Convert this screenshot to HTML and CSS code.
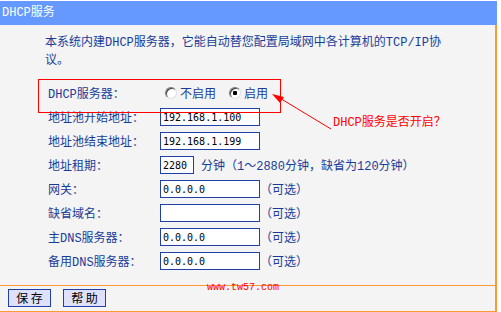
FILE: index.html
```html
<!DOCTYPE html>
<html lang="zh-CN">
<head>
    <meta charset="UTF-8">
    <title>DHCP服务</title>
    <link rel="stylesheet" href="styles.css">
</head>
<body>
    <div class="page">
        <div class="title">DHCP服务</div>

        <div class="content">
            <p class="intro">本系统内建DHCP服务器，它能自动替您配置局域网中各计算机的TCP/IP协议。</p>

            <div class="form">
                <div class="row">
                    <span class="label">DHCP服务器：</span>
                    <span class="radios">
                        <label class="radio"><input type="radio" name="dhcp">不启用</label>
                        <label class="radio"><input type="radio" name="dhcp" checked>启用</label>
                    </span>
                </div>
                <div class="row">
                    <span class="label">地址池开始地址：</span>
                    <input class="text" type="text" value="192.168.1.100">
                </div>
                <div class="row">
                    <span class="label">地址池结束地址：</span>
                    <input class="text" type="text" value="192.168.1.199">
                </div>
                <div class="row">
                    <span class="label">地址租期：</span>
                    <input class="text short" type="text" value="2280">
                    <span class="hint">分钟（1～2880分钟，缺省为120分钟）</span>
                </div>
                <div class="row">
                    <span class="label">网关：</span>
                    <input class="text" type="text" value="0.0.0.0">
                    <span class="opt">（可选）</span>
                </div>
                <div class="row">
                    <span class="label">缺省域名：</span>
                    <input class="text" type="text" value="">
                    <span class="opt">（可选）</span>
                </div>
                <div class="row">
                    <span class="label">主DNS服务器：</span>
                    <input class="text" type="text" value="0.0.0.0">
                    <span class="opt">（可选）</span>
                </div>
                <div class="row">
                    <span class="label">备用DNS服务器：</span>
                    <input class="text" type="text" value="0.0.0.0">
                    <span class="opt">（可选）</span>
                </div>
            </div>
        </div>

        <div class="footer">
            <button class="btn">保 存</button>
            <button class="btn">帮 助</button>
        </div>

        <!-- annotation layer -->
        <div class="mark-box"></div>
        <svg class="mark-arrow" width="70" height="45" viewBox="0 0 70 45">
            <line x1="10" y1="8" x2="63" y2="40" stroke="#ff0000" stroke-width="1"/>
            <polygon points="4,5 16,8 12,14" fill="#ff0000"/>
        </svg>
        <div class="mark-note">DHCP服务是否开启？</div>
        <div class="watermark">www.tw57.com</div>
    </div>
</body>
</html>
```

FILE: styles.css
```css
body {
    margin: 0;
    background: #fff;
    font-family: "Liberation Mono", "Noto Sans CJK SC", monospace;
    font-size: 12px;
}
.page {
    position: relative;
    width: 497px;
    margin-top: 1px;
}
.title {
    height: 24px;
    line-height: 24px;
    padding-left: 2px;
    background: #6699ff;
    color: #fff;
}
.content {
    box-sizing: border-box;
    height: 260px;
    padding-top: 9px;
    background: #f4f4f4;
    border-right: 2px solid #ff9933;
    color: #183c98;
}
.intro {
    margin: 0;
    padding-left: 45px;
    width: 402px;
    line-height: 18px;
}
.form {
    margin-top: 11px;
    padding-left: 48px;
}
.row {
    display: flex;
    align-items: center;
    height: 24px;
}
.label {
    width: 112px;
    flex: none;
}
.radios {
    display: flex;
    align-items: center;
    padding-left: 5px;
}
.radio {
    display: flex;
    align-items: center;
}
.radio + .radio { margin-left: 13px; }
.radio input {
    appearance: none;
    -webkit-appearance: none;
    margin: 0 3px 0 0;
    width: 12px;
    height: 12px;
    border-radius: 50%;
    border: 1px solid;
    border-color: #7a7a7a #e0e0e0 #e0e0e0 #7a7a7a;
    background: #fff;
    box-shadow: inset 1px 1px 0 #404040;
}
.radio input:checked {
    background: radial-gradient(circle, #000 0 2px, #fff 2.5px);
}
.text {
    box-sizing: border-box;
    width: 100px;
    height: 18px;
    margin: 0;
    padding: 0 2px;
    border: 1px solid #1f40a8;
    background: #fff;
    color: #000;
    font-family: "DejaVu Sans Mono", monospace;
    font-size: 10px;
}
.text.short { width: 34px; }
.hint { margin-left: 7px; }
.footer {
    box-sizing: border-box;
    height: 27px;
    padding: 3px 0 0 8px;
    background: #f4f4f4;
    border-top: 1px solid #ff9933;
    border-bottom: 1px solid #ff9933;
    border-right: 2px solid #ff9933;
    display: flex;
    align-items: flex-start;
    gap: 12px;
}
.btn {
    width: 43px;
    height: 18px;
    padding: 0;
    border: 1px solid #1f40a8;
    background: #dfe0fb;
    color: #000;
    font-family: "Noto Sans CJK SC", sans-serif;
    font-size: 12px;
    line-height: 16px;
}
.mark-box {
    position: absolute;
    left: 38px;
    top: 78px;
    width: 241px;
    height: 32px;
    border: 1px solid #ff0000;
}
.mark-arrow {
    position: absolute;
    left: 268px;
    top: 88px;
}
.mark-note {
    position: absolute;
    left: 333px;
    top: 114px;
    line-height: 16px;
    color: #ff0000;
}
.watermark {
    position: absolute;
    left: 207px;
    top: 281px;
    font-family: "Liberation Mono", monospace;
    font-size: 10px;
    color: #ff0000;
}
```
